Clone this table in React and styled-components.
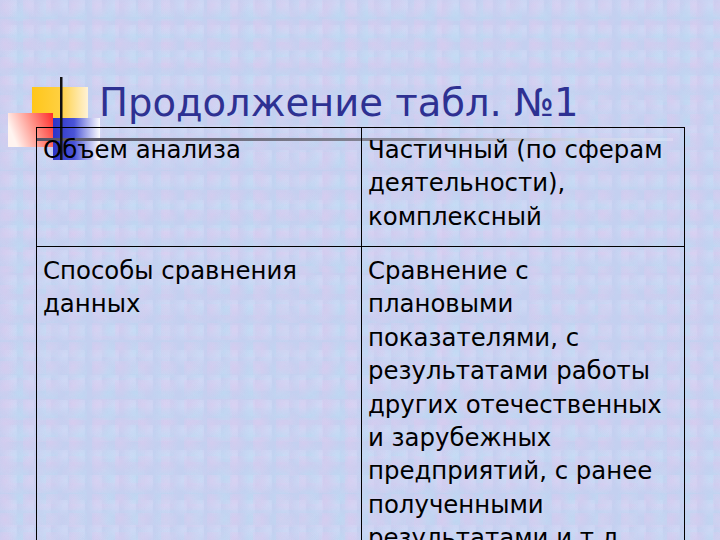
import React from "react";
import styled, { createGlobalStyle } from "styled-components";

const GlobalStyle = createGlobalStyle`
  html, body {
    margin: 0;
    padding: 0;
  }
  body {
    width: 720px;
    height: 540px;
    overflow: hidden;
    font-family: "DejaVu Sans", "Noto Sans", sans-serif;
  }
`;

const Slide = styled.div`
  position: relative;
  width: 720px;
  height: 540px;
  overflow: hidden;
  background-color: #c4d0f0;
  background-image:
    radial-gradient(circle at 20% 30%, rgba(226, 200, 238, 0.45), transparent 60%),
    radial-gradient(circle at 70% 75%, rgba(184, 224, 244, 0.45), transparent 55%),
    radial-gradient(circle at 80% 20%, rgba(216, 224, 250, 0.5), transparent 50%),
    radial-gradient(circle at 35% 80%, rgba(220, 206, 240, 0.35), transparent 55%);
  background-size: 23px 19px, 29px 21px, 17px 25px, 31px 17px;
`;

const Decoration = styled.svg`
  position: absolute;
  left: 0;
  top: 70px;
  z-index: 0;
`;

const Title = styled.h1`
  position: relative;
  z-index: 1;
  margin: 0;
  padding: 79px 0 0 99px;
  height: 48px;
  font-family: "DejaVu Sans", sans-serif;
  font-weight: normal;
  font-size: 38.5px;
  line-height: 48px;
  color: #2e3192;
  white-space: nowrap;
`;

const Table = styled.table`
  position: relative;
  z-index: 1;
  margin-left: 36px;
  width: 648px;
  border-collapse: collapse;
  table-layout: fixed;
`;

const Row = styled.tr`
  height: ${(p) => p.$h}px;
`;

const Cell = styled.td`
  box-sizing: border-box;
  border: 1.5px solid #000;
  vertical-align: top;
  padding: ${(p) => p.$pt}px 6px 0 6px;
  width: ${(p) => p.$w}px;
  font-family: "DejaVu Sans", sans-serif;
  font-size: 24.4px;
  line-height: 33.4px;
  color: #000;
`;

const Line = styled.div`
  white-space: nowrap;
`;

const Lines = ({ items }) => items.map((t) => <Line key={t}>{t}</Line>);

export default function App() {
  return (
    <>
      <GlobalStyle />
      <Slide>
        <Decoration width="720" height="100" viewBox="0 70 720 100">
          <defs>
            <linearGradient id="yel" x1="0" x2="1" y1="0" y2="0">
              <stop offset="0" stopColor="#ffc61a" />
              <stop offset="0.5" stopColor="#ffd040" />
              <stop offset="1" stopColor="#fff2d6" />
            </linearGradient>
            <linearGradient id="red" x1="0" x2="1" y1="0.3" y2="0">
              <stop offset="0" stopColor="#fff4f0" />
              <stop offset="0.55" stopColor="#ff8a80" />
              <stop offset="1" stopColor="#ff2a2a" />
            </linearGradient>
            <linearGradient id="blu" x1="0" x2="1" y1="0" y2="0">
              <stop offset="0" stopColor="#2c34c8" />
              <stop offset="0.45" stopColor="#4a54d8" />
              <stop offset="1" stopColor="#ffffff" stopOpacity="0.9" />
            </linearGradient>
            <linearGradient id="rule" x1="0" x2="1" y1="0" y2="0">
              <stop offset="0" stopColor="#555466" />
              <stop offset="0.6" stopColor="#8a8a99" />
              <stop offset="1" stopColor="#ffffff" stopOpacity="0.2" />
            </linearGradient>
          </defs>
          <rect x="32" y="87" width="56" height="33" fill="url(#yel)" />
          <rect x="8" y="113" width="45" height="34" fill="url(#red)" />
          <rect x="53" y="118" width="47" height="42" fill="url(#blu)" />
          <rect x="37" y="138" width="636" height="3" fill="url(#rule)" />
          <rect x="60" y="77" width="2.5" height="83" fill="#111" />
        </Decoration>
        <Title>Продолжение табл. №1</Title>
        <Table>
          <tbody>
            <Row $h={119}>
              <Cell $w={325} $pt={5}>
                <Lines items={["Объем анализа"]} />
              </Cell>
              <Cell $w={323} $pt={5}>
                <Lines
                  items={[
                    "Частичный (по сферам",
                    "деятельности),",
                    "комплексный",
                  ]}
                />
              </Cell>
            </Row>
            <Row $h={320}>
              <Cell $pt={7}>
                <Lines items={["Способы сравнения", "данных"]} />
              </Cell>
              <Cell $pt={7}>
                <Lines
                  items={[
                    "Сравнение с",
                    "плановыми",
                    "показателями, с",
                    "результатами работы",
                    "других отечественных",
                    "и зарубежных",
                    "предприятий, с ранее",
                    "полученными",
                    "результатами и т.д.",
                  ]}
                />
              </Cell>
            </Row>
          </tbody>
        </Table>
      </Slide>
    </>
  );
}
